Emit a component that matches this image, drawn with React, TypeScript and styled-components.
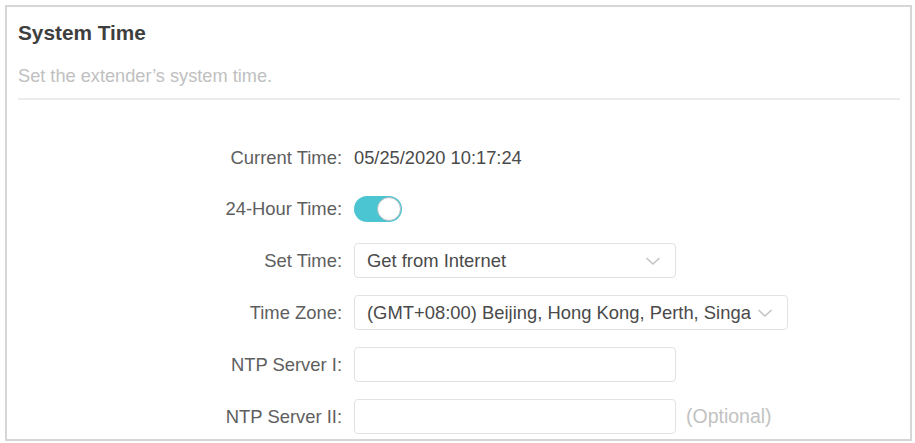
import React from "react";
import styled, { createGlobalStyle } from "styled-components";

const Global = createGlobalStyle`
  html, body { margin: 0; padding: 0; background: #fff; }
  body { font-family: "Liberation Sans", Arial, sans-serif; }
  * { box-sizing: border-box; }
`;

const Page = styled.div`
  padding: 5px 3px 2px 5px;
  height: 443px;
`;

const Card = styled.section`
  height: 100%;
  border: 2px solid #d6d6d6;
  padding: 0 10px 0 11px;
`;

const Header = styled.header`
  padding-top: 14px;
  border-bottom: 2px solid #ececec;
  padding-bottom: 10px;
`;

const Title = styled.h1`
  margin: 0;
  font-size: 20.8px;
  font-weight: bold;
  color: #3e3e3e;
  line-height: 24px;
`;

const Subtitle = styled.p`
  margin: 19px 0 0;
  font-size: 18.2px;
  color: #c0c0c0;
  line-height: 24px;
`;

const Form = styled.div`
  display: grid;
  grid-template-columns: 324px 1fr;
  grid-auto-rows: auto;
  column-gap: 12px;
  row-gap: 17px;
  padding-top: 41px;
  align-items: center;
`;

const Label = styled.label`
  justify-self: end;
  font-size: 18.4px;
  color: #5e5e5e;
  line-height: 34px;
`;

const Field = styled.div`
  display: flex;
  align-items: center;
  gap: 10px;
  min-height: 34px;
`;

const Value = styled.span`
  font-size: 18.3px;
  color: #4a4a4a;
`;

const Toggle = styled.div<{ $on: boolean }>`
  position: relative;
  width: 48px;
  height: 26px;
  border-radius: 13px;
  background: ${(p) => (p.$on ? "#4cc5d2" : "#ccc")};
`;

const Knob = styled.span<{ $on: boolean }>`
  position: absolute;
  top: 1px;
  left: ${(p) => (p.$on ? "23px" : "1px")};
  width: 24px;
  height: 24px;
  border-radius: 50%;
  background: #fff;
  border: 1px solid #aebcbe;
`;

const Box = styled.div<{ $w: number }>`
  width: ${(p) => p.$w}px;
  height: 35px;
  border: 1px solid #e2e2e2;
  border-radius: 4px;
  display: flex;
  align-items: center;
  padding: 0 10px 0 12px;
  font-size: 18.4px;
  color: #4a4a4a;
  background: #fff;
`;

const BoxText = styled.span`
  flex: 1;
  overflow: hidden;
  white-space: nowrap;
`;

const Chevron = styled.svg`
  flex: none;
  margin-left: 6px;
  margin-right: 4px;
`;

const Hint = styled.span`
  font-size: 19.5px;
  color: #c2c2c2;
`;

const Down = () => (
  <Chevron width="16" height="10" viewBox="0 0 16 10">
    <path d="M1.5 2 L8 8 L14.5 2" fill="none" stroke="#c4c4c4" strokeWidth="1.6" />
  </Chevron>
);

export default function App() {
  return (
    <>
      <Global />
      <Page>
        <Card>
          <Header>
            <Title>System Time</Title>
            <Subtitle>Set the extender’s system time.</Subtitle>
          </Header>
          <Form>
            <Label>Current Time:</Label>
            <Field>
              <Value>05/25/2020 10:17:24</Value>
            </Field>
            <Label>24-Hour Time:</Label>
            <Field>
              <Toggle $on>
                <Knob $on />
              </Toggle>
            </Field>
            <Label>Set Time:</Label>
            <Field>
              <Box $w={322}>
                <BoxText>Get from Internet</BoxText>
                <Down />
              </Box>
            </Field>
            <Label>Time Zone:</Label>
            <Field>
              <Box $w={434}>
                <BoxText>(GMT+08:00) Beijing, Hong Kong, Perth, Singapore</BoxText>
                <Down />
              </Box>
            </Field>
            <Label>NTP Server I:</Label>
            <Field>
              <Box $w={322} />
            </Field>
            <Label>NTP Server II:</Label>
            <Field>
              <Box $w={322} />
              <Hint>(Optional)</Hint>
            </Field>
          </Form>
        </Card>
      </Page>
    </>
  );
}
